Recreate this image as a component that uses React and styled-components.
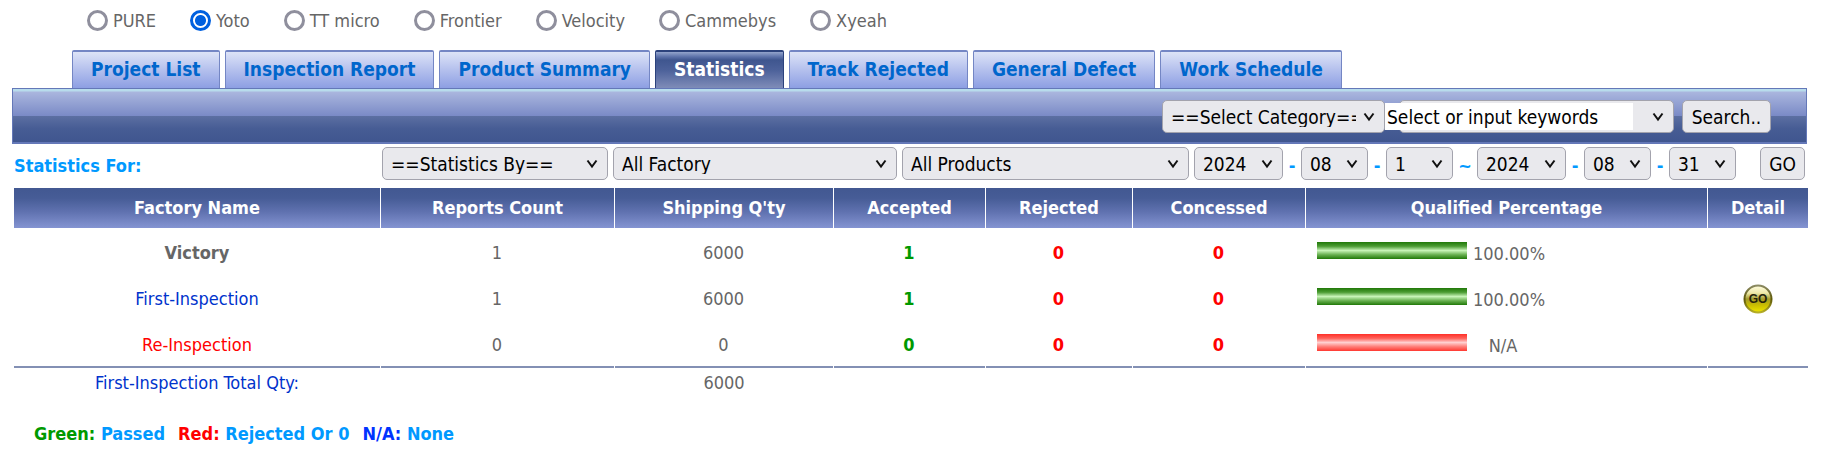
import React, { useState } from 'react';
import styled, { createGlobalStyle } from 'styled-components';

const brands = ['PURE', 'Yoto', 'TT micro', 'Frontier', 'Velocity', 'Cammebys', 'Xyeah'];

const tabs = [
  'Project List',
  'Inspection Report',
  'Product Summary',
  'Statistics',
  'Track Rejected',
  'General Defect',
  'Work Schedule',
];

const columns = [
  { title: 'Factory Name', width: 366 },
  { title: 'Reports Count', width: 234 },
  { title: "Shipping Q'ty", width: 219 },
  { title: 'Accepted', width: 152 },
  { title: 'Rejected', width: 147 },
  { title: 'Concessed', width: 173 },
  { title: 'Qualified Percentage', width: 402 },
  { title: 'Detail', width: 101 },
];

const rows = [
  { name: 'Victory', color: '#666666', bold: true, count: 1, qty: 6000, accepted: 1, rejected: 0, concessed: 0, rate: '100.00%' },
  { name: 'First-Inspection', color: '#0033cc', count: 1, qty: 6000, accepted: 1, rejected: 0, concessed: 0, rate: '100.00%', detail: true },
  { name: 'Re-Inspection', color: '#ff0000', count: 0, qty: 0, accepted: 0, rejected: 0, concessed: 0, rate: 'N/A' },
];

const Dropdown = ({ id, label, text, width }) => (
  <SelectBox $width={width}>
    <Select id={id} aria-label={label}>
      <option>{text}</option>
    </Select>
    <Chevron viewBox="0 0 12 12" aria-hidden="true">
      <path d="M1.5 2.5 L6 8.5 L10.5 2.5" fill="none" stroke="#111" strokeWidth="2" />
    </Chevron>
  </SelectBox>
);

const GoIcon = () => (
  <svg width="30" height="30" viewBox="0 0 30 30" aria-hidden="true">
    <defs>
      <linearGradient id="goFace" x1="0" y1="0" x2="0" y2="1">
        <stop offset="0" stopColor="#fffce0" />
        <stop offset="0.28" stopColor="#eee9a8" />
        <stop offset="0.5" stopColor="#a39a2c" />
        <stop offset="0.72" stopColor="#c9bd00" />
        <stop offset="1" stopColor="#efe600" />
      </linearGradient>
      <linearGradient id="goRim" x1="0" y1="0" x2="0" y2="1">
        <stop offset="0" stopColor="#8b8a62" />
        <stop offset="0.5" stopColor="#5c5708" />
        <stop offset="1" stopColor="#b5ad28" />
      </linearGradient>
    </defs>
    <circle cx="15" cy="15" r="13.5" fill="url(#goFace)" stroke="url(#goRim)" strokeWidth="2" />
    <text x="15" y="19" textAnchor="middle" fontSize="12" fontWeight="bold" fontFamily="'Liberation Sans', sans-serif" fill="#25220a">GO</text>
  </svg>
);

const App = () => {
  const [brand, setBrand] = useState('Yoto');
  const [keywords, setKeywords] = useState('Select or input keywords');

  return (
    <Page>
      <GlobalStyle />
      <BrandList>
        {brands.map((name) => (
          <Brand key={name}>
            <Radio type="radio" name="brand" checked={brand === name} onChange={() => setBrand(name)} />
            {name}
          </Brand>
        ))}
      </BrandList>

      <TabList>
        {tabs.map((name) => (
          <Tab key={name} href="#" $active={name === 'Statistics'}>{name}</Tab>
        ))}
      </TabList>

      <SearchBar>
        <Dropdown label="Category" text="==Select Category==" width={223} />
        <Combo>
          <Dropdown label="Keyword list" text="" width={275} />
          <Keywords aria-label="Keywords" value={keywords} onChange={(e) => setKeywords(e.target.value)} />
        </Combo>
        <SearchButton>Search..</SearchButton>
      </SearchBar>

      <FilterBar>
        <FilterLabel htmlFor="statistics-by">Statistics For:</FilterLabel>
        <Filters>
          <Dropdown id="statistics-by" text="==Statistics By==" width={226} />
          <Dropdown label="Factory" text="All Factory" width={284} />
          <Dropdown label="Product" text="All Products" width={287} />
          <DateRange>
            <Dropdown label="From year" text="2024" width={89} />
            <Separator>-</Separator>
            <Dropdown label="From month" text="08" width={67} />
            <Separator>-</Separator>
            <Dropdown label="From day" text="1" width={67} />
            <Separator $wide>~</Separator>
            <Dropdown label="To year" text="2024" width={89} />
            <Separator>-</Separator>
            <Dropdown label="To month" text="08" width={67} />
            <Separator>-</Separator>
            <Dropdown label="To day" text="31" width={67} />
          </DateRange>
        </Filters>
        <GoButton>GO</GoButton>
      </FilterBar>

      <Table>
        <colgroup>
          {columns.map((c) => <Col key={c.title} $width={c.width} />)}
        </colgroup>
        <thead>
          <tr>
            {columns.map((c) => <Th key={c.title}>{c.title}</Th>)}
          </tr>
        </thead>
        <tbody>
          {rows.map((r) => (
            <tr key={r.name}>
              <Td $color={r.color} $bold={r.bold}>{r.name}</Td>
              <Td>{r.count}</Td>
              <Td>{r.qty}</Td>
              <Td $color="#009900" $bold>{r.accepted}</Td>
              <Td $color="#ff0000" $bold>{r.rejected}</Td>
              <Td $color="#ff0000" $bold>{r.concessed}</Td>
              <Td>
                <Rate>
                  <Bar $none={r.rate === 'N/A'} />
                  <RateText>{r.rate}</RateText>
                </Rate>
              </Td>
              <Td>{r.detail && <Detail href="#" aria-label="Detail"><GoIcon /></Detail>}</Td>
            </tr>
          ))}
        </tbody>
        <tfoot>
          <tr>
            <TotalTd $color="#0033cc">First-Inspection Total Qty:</TotalTd>
            <TotalTd />
            <TotalTd>6000</TotalTd>
            <TotalTd />
            <TotalTd />
            <TotalTd />
            <TotalTd />
            <TotalTd />
          </tr>
        </tfoot>
      </Table>

      <Legend>
        <LegendItem><Key $color="#009900">Green:</Key> Passed</LegendItem>
        <LegendItem><Key $color="#ff0000">Red:</Key> Rejected Or 0</LegendItem>
        <LegendItem><Key $color="#0033ff">N/A:</Key> None</LegendItem>
      </Legend>
    </Page>
  );
};

export default App;

const GlobalStyle = createGlobalStyle`
  * {
    box-sizing: border-box;
  }

  body {
    margin: 0;
    background: #fff;
    color: #666;
    font-family: "DejaVu Sans Condensed", "DejaVu Sans", sans-serif;
    font-stretch: condensed;
    font-size: 18px;
    line-height: 20px;
  }

  button, input, select {
    font: inherit;
    font-size: 19px;
    color: #000;
  }
`;

const Page = styled.div`
  padding: 10px 17px 0 12px;
`;

const BrandList = styled.div`
  display: flex;
  gap: 34px;
  height: 40px;
  padding-left: 75px;
  align-items: flex-start;
`;

const Brand = styled.label`
  display: flex;
  align-items: center;
  gap: 5px;
  white-space: nowrap;
`;

const Radio = styled.input`
  appearance: none;
  width: 21px;
  height: 21px;
  margin: 0;
  border: 3px solid #8f8f9d;
  border-radius: 50%;
  background: #fff;

  &:checked {
    border-color: #0060df;
    background: radial-gradient(circle, #0060df 5px, #fff 6px);
  }
`;

const TabList = styled.nav`
  display: flex;
  gap: 5px;
  padding-left: 60px;
`;

const Tab = styled.a`
  height: 38px;
  padding: 0 18px;
  border: 1px solid ${(p) => (p.$active ? '#2c427c' : '#7486c4')};
  border-top-width: 2px;
  border-bottom: 0;
  border-radius: 2px 2px 0 0;
  background: ${(p) => (p.$active
    ? 'linear-gradient(#93a4cc 0, #5a6fa8 5px, #3f568f 8px, #4c619a 50%, #7f8cb8)'
    : 'linear-gradient(#dde3f7, #b4c0ed 50%, #8d9fe3)')};
  color: ${(p) => (p.$active ? '#fff' : '#0066cc')};
  font-size: 19px;
  font-weight: bold;
  line-height: 34px;
  text-decoration: none;
  white-space: nowrap;
`;

const SearchBar = styled.div`
  display: flex;
  justify-content: flex-end;
  align-items: center;
  height: 56px;
  padding: 2px 35px 0 0;
  border: 1px solid #6478b8;
  border-bottom-width: 2px;
  background: linear-gradient(#b8dcec 0, #b8dcec 2px, #aab6de 3px, #7a8ac6 27px, #5c6fa2 27px, #465c94 40px, #40568f);
`;

const SelectBox = styled.div`
  display: grid;
  width: ${(p) => p.$width}px;
  align-items: center;
`;

const Select = styled.select`
  grid-area: 1 / 1;
  appearance: none;
  width: 100%;
  height: 33px;
  padding: 0 28px 0 8px;
  border: 1px solid #a3a3ad;
  border-radius: 5px;
  background: #e9e9ed;
`;

const Chevron = styled.svg`
  grid-area: 1 / 1;
  justify-self: end;
  width: 14px;
  height: 12px;
  margin-right: 9px;
  pointer-events: none;
`;

const Combo = styled.div`
  position: relative;
  padding-left: 14px;
  margin-right: 8px;
`;

/* text box laid over the drop-down, so that only its arrow shows */
const Keywords = styled.input`
  position: absolute;
  top: 3px;
  left: 0;
  width: 248px;
  height: 27px;
  padding: 2px;
  border: 0;
`;

const Button = styled.button`
  height: 33px;
  padding: 0;
  border: 1px solid #a3a3ad;
  border-radius: 5px;
  background: #e9e9ed;
`;

const SearchButton = styled(Button)`
  width: 89px;
`;

const GoButton = styled(Button)`
  width: 45px;
  margin-left: 24px;
`;

const FilterBar = styled.div`
  display: flex;
  align-items: center;
  height: 44px;
  padding: 0 2px 5px;
`;

const FilterLabel = styled.label`
  margin-right: auto;
  padding-top: 4px;
  color: #0099ff;
  font-weight: bold;
`;

const Filters = styled.div`
  display: flex;
  gap: 5px;
`;

const DateRange = styled.div`
  display: flex;
  align-items: center;
`;

const Separator = styled.span`
  width: ${(p) => (p.$wide ? 24 : 18)}px;
  padding-top: 4px;
  color: #0099ff;
  font-weight: bold;
  text-align: center;
`;

const Table = styled.table`
  width: calc(100% - 2px);
  margin-left: 2px;
  border-collapse: separate;
  border-spacing: 0;
  table-layout: fixed;
`;

const Col = styled.col`
  width: ${(p) => p.$width}px;
`;

const Th = styled.th`
  height: 40px;
  padding: 0;
  background: linear-gradient(#425891, #465c96 25%, #6072b0 60%, #8494d2);
  color: #fff;

  & + & {
    border-left: 1px solid #fff;
  }
`;

const Td = styled.td`
  height: 46px;
  padding: 4px 0 0;
  color: ${(p) => p.$color || '#666666'};
  font-weight: ${(p) => (p.$bold ? 'bold' : 'normal')};
  text-align: center;
`;

const TotalTd = styled(Td)`
  height: 32px;
  padding: 2px 0 0;
  background: linear-gradient(#8390b4 2px, transparent 2px);

  & + & {
    border-left: 1px solid #fff;
  }
`;

const Rate = styled.div`
  display: flex;
  align-items: flex-end;
  gap: 6px;
  padding-left: 12px;
`;

const Bar = styled.div`
  width: 150px;
  height: 17px;
  margin-bottom: 5px;
  background: ${(p) => (p.$none
    ? 'linear-gradient(#ff3028, #ff6058 25%, #ffd0d0 50%, #ff7c76 75%, #ff3830)'
    : 'linear-gradient(#207808, #4c9c34 25%, #c8f4b8 50%, #68b050 75%, #207808)')};
`;

const RateText = styled.span`
  min-width: 60px;
`;

const Detail = styled.a`
  display: flex;
  justify-content: center;
`;

const Legend = styled.div`
  display: flex;
  gap: 13px;
  padding: 26px 0 8px 22px;
  color: #0099ff;
  font-weight: bold;
`;

const LegendItem = styled.span`
  white-space: nowrap;
`;

const Key = styled.span`
  color: ${(p) => p.$color};
`;
